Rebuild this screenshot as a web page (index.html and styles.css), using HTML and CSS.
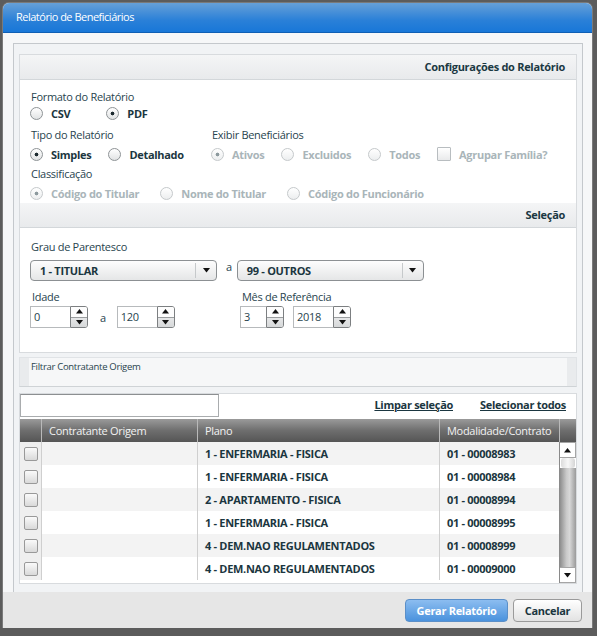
FILE: index.html
```html
<!DOCTYPE html>
<html lang="pt-BR">
<head>
    <meta charset="UTF-8">
    <meta name="viewport" content="width=device-width, initial-scale=1.0">
    <title>Relatório de Beneficiários</title>
    <link rel="stylesheet" href="styles.css">
</head>
<body>
    <div class="dialog">
        <div class="dialog-title">Relatório de Beneficiários</div>

        <div class="dialog-body">
            <div class="panel">

                <div class="section-box">
                    <div class="section-header">Configurações do Relatório</div>
                    <div class="config">
                        <div class="field-label">Formato do Relatório</div>
                        <div class="options">
                            <label class="opt opt-csv"><span class="radio"></span>CSV</label>
                            <label class="opt"><span class="radio checked"></span>PDF</label>
                        </div>

                        <div class="option-groups">
                            <div class="group group-tipo">
                                <div class="field-label">Tipo do Relatório</div>
                                <div class="options spaced">
                                    <label class="opt"><span class="radio checked"></span>Simples</label>
                                    <label class="opt"><span class="radio"></span>Detalhado</label>
                                </div>
                            </div>
                            <div class="group">
                                <div class="field-label">Exibir Beneficiários</div>
                                <div class="options spaced">
                                    <label class="opt disabled"><span class="radio checked"></span>Ativos</label>
                                    <label class="opt disabled"><span class="radio"></span>Excluidos</label>
                                    <label class="opt disabled"><span class="radio"></span>Todos</label>
                                    <label class="opt disabled"><span class="checkbox"></span>Agrupar Família?</label>
                                </div>
                            </div>
                        </div>

                        <div class="field-label gap-top">Classificação</div>
                        <div class="options spaced wide">
                            <label class="opt disabled"><span class="radio checked"></span>Código do Titular</label>
                            <label class="opt disabled"><span class="radio"></span>Nome do Titular</label>
                            <label class="opt disabled"><span class="radio"></span>Código do Funcionário</label>
                        </div>
                    </div>

                    <div class="section-header">Seleção</div>
                    <div class="selection">
                        <div class="field-label">Grau de Parentesco</div>
                        <div class="select-row">
                            <div class="select">
                                <span class="select-value">1 - TITULAR</span>
                                <span class="select-arrow"><svg width="7" height="5" viewBox="0 0 7 5"><path d="M0 0H7L3.5 4.5Z" fill="#111"/></svg></span>
                            </div>
                            <span class="sep">a</span>
                            <div class="select">
                                <span class="select-value">99 - OUTROS</span>
                                <span class="select-arrow"><svg width="7" height="5" viewBox="0 0 7 5"><path d="M0 0H7L3.5 4.5Z" fill="#111"/></svg></span>
                            </div>
                        </div>

                        <div class="range-row">
                            <div class="range range-idade">
                                <div class="field-label">Idade</div>
                                <div class="spin-row">
                                    <div class="spinner">
                                        <span class="spin-value">0</span>
                                        <span class="spin-btns">
                                            <span class="spin-up"><svg width="7" height="5" viewBox="0 0 7 5"><path d="M0 4.5H7L3.5 0Z" fill="#111"/></svg></span>
                                            <span class="spin-down"><svg width="7" height="5" viewBox="0 0 7 5"><path d="M0 0H7L3.5 4.5Z" fill="#111"/></svg></span>
                                        </span>
                                    </div>
                                    <span class="spin-sep">a</span>
                                    <div class="spinner">
                                        <span class="spin-value">120</span>
                                        <span class="spin-btns">
                                            <span class="spin-up"><svg width="7" height="5" viewBox="0 0 7 5"><path d="M0 4.5H7L3.5 0Z" fill="#111"/></svg></span>
                                            <span class="spin-down"><svg width="7" height="5" viewBox="0 0 7 5"><path d="M0 0H7L3.5 4.5Z" fill="#111"/></svg></span>
                                        </span>
                                    </div>
                                </div>
                            </div>
                            <div class="range">
                                <div class="field-label">Mês de Referência</div>
                                <div class="spin-row">
                                    <div class="spinner">
                                        <span class="spin-value short">3</span>
                                        <span class="spin-btns">
                                            <span class="spin-up"><svg width="7" height="5" viewBox="0 0 7 5"><path d="M0 4.5H7L3.5 0Z" fill="#111"/></svg></span>
                                            <span class="spin-down"><svg width="7" height="5" viewBox="0 0 7 5"><path d="M0 0H7L3.5 4.5Z" fill="#111"/></svg></span>
                                        </span>
                                    </div>
                                    <div class="spinner spinner-year">
                                        <span class="spin-value">2018</span>
                                        <span class="spin-btns">
                                            <span class="spin-up"><svg width="7" height="5" viewBox="0 0 7 5"><path d="M0 4.5H7L3.5 0Z" fill="#111"/></svg></span>
                                            <span class="spin-down"><svg width="7" height="5" viewBox="0 0 7 5"><path d="M0 0H7L3.5 4.5Z" fill="#111"/></svg></span>
                                        </span>
                                    </div>
                                </div>
                            </div>
                        </div>
                    </div>
                </div>

                <div class="filter-box">Filtrar Contratante Origem</div>

                <div class="grid-box">
                    <div class="grid-toolbar">
                        <div class="search"></div>
                        <div class="grid-links">
                            <a href="#">Limpar seleção</a>
                            <a href="#">Selecionar todos</a>
                        </div>
                    </div>

                    <div class="grid-head">
                        <div class="th"></div>
                        <div class="th">Contratante Origem</div>
                        <div class="th">Plano</div>
                        <div class="th">Modalidade/Contrato</div>
                        <div class="th"></div>
                    </div>

                    <div class="grid-body">
                        <div class="rows">
                            <div class="row"><div class="cell-check"><span class="box"></span></div><div class="cell"></div><div class="cell">1 - ENFERMARIA - FISICA</div><div class="cell">01 - 00008983</div></div>
                            <div class="row"><div class="cell-check"><span class="box"></span></div><div class="cell"></div><div class="cell">1 - ENFERMARIA - FISICA</div><div class="cell">01 - 00008984</div></div>
                            <div class="row"><div class="cell-check"><span class="box"></span></div><div class="cell"></div><div class="cell">2 - APARTAMENTO - FISICA</div><div class="cell">01 - 00008994</div></div>
                            <div class="row"><div class="cell-check"><span class="box"></span></div><div class="cell"></div><div class="cell">1 - ENFERMARIA - FISICA</div><div class="cell">01 - 00008995</div></div>
                            <div class="row"><div class="cell-check"><span class="box"></span></div><div class="cell"></div><div class="cell">4 - DEM.NAO REGULAMENTADOS</div><div class="cell">01 - 00008999</div></div>
                            <div class="row"><div class="cell-check"><span class="box"></span></div><div class="cell"></div><div class="cell">4 - DEM.NAO REGULAMENTADOS</div><div class="cell">01 - 00009000</div></div>
                        </div>
                        <div class="scrollbar">
                            <div class="scroll-btn"><svg width="7" height="5" viewBox="0 0 7 5"><path d="M0 4.5H7L3.5 0Z" fill="#111"/></svg></div>
                            <div class="scroll-gap"></div>
                            <div class="scroll-thumb"></div>
                            <div class="scroll-btn"><svg width="7" height="5" viewBox="0 0 7 5"><path d="M0 0H7L3.5 4.5Z" fill="#111"/></svg></div>
                        </div>
                    </div>
                </div>

            </div>
        </div>

        <div class="dialog-footer">
            <button class="btn btn-primary">Gerar Relatório</button>
            <button class="btn btn-cancel">Cancelar</button>
        </div>
    </div>
</body>
</html>
```

FILE: styles.css
```css
body {
    margin: 0;
    background-color: #5c5c5c;
    font-family: "Open Sans", "Noto Sans", sans-serif;
    font-size: 11px;
    letter-spacing: -0.3px;
    color: #28444e;
}
.dialog {
    margin: 3px 0 0 3px;
    width: 589px;
    height: 625px;
    background-color: #f6f7f8;
    border-radius: 6px 6px 0 0;
    box-shadow: 0 0 0 1px #7a7a7a;
    display: flex;
    flex-direction: column;
    overflow: hidden;
}
.dialog-title {
    height: 29px;
    line-height: 27px;
    padding-left: 13px;
    color: #fff;
    letter-spacing: -0.5px;
    background: linear-gradient(#66a0d8, #2a80d8 60%, #1877d8);
    border-bottom: 1px solid #0f5fb4;
}
.dialog-body {
    flex: 1;
    display: flex;
    padding: 10px 9px 0 10px;
}
.panel {
    flex: 1;
    border: 1px solid #c4c8cc;
    border-bottom: none;
    background-color: #f1f3f5;
    padding: 10px 5px 0 5px;
}

/* sections */
.section-box {
    border: 1px solid #d8dbde;
    background-color: #fff;
}
.section-header {
    height: 24px;
    line-height: 24px;
    text-align: right;
    padding-right: 11px;
    font-weight: bold;
    color: #1b3842;
    background: linear-gradient(#f4f5f6, #e8eaec);
    border-bottom: 1px solid #d3d7da;
}
.config {
    height: 114px;
    padding: 9px 0 0 10px;
}
.field-label {
    line-height: 15px;
    padding-left: 1px;
}
.gap-top {
    margin-top: 3px;
}
.options {
    display: flex;
    align-items: center;
    height: 18px;
}
.options.spaced {
    margin-top: 3px;
}
.option-groups {
    display: flex;
    margin-top: 5px;
}
.group-tipo {
    width: 181px;
}
.opt {
    display: inline-flex;
    align-items: center;
    gap: 8px;
    margin-right: 17px;
    font-weight: bold;
    color: #1b3640;
}
.options.wide .opt {
    margin-right: 21px;
}
.opt-csv {
    margin-right: 36px;
}
.opt.disabled {
    color: #a9b5b9;
}
.radio {
    flex: none;
    width: 11px;
    height: 11px;
    border: 1px solid #8e9396;
    border-radius: 50%;
    background: linear-gradient(#ffffff, #e1e3e4);
}
.radio.checked {
    background: radial-gradient(circle, #1d2b30 1.6px, transparent 2.2px), linear-gradient(#ffffff, #e1e3e4);
}
.disabled .radio {
    border-color: #c5c9cb;
    background: linear-gradient(#ffffff, #eceeef);
}
.disabled .radio.checked {
    background: radial-gradient(circle, #8d9a9e 1.6px, transparent 2.2px), linear-gradient(#ffffff, #eceeef);
}
.checkbox {
    flex: none;
    width: 12px;
    height: 12px;
    border: 1px solid #b8bdc0;
    border-radius: 1px;
    background: linear-gradient(#ffffff, #e9eaeb);
}

/* selection */
.selection {
    height: 113px;
    padding: 11px 0 0 10px;
}
.select-row {
    display: flex;
    margin-top: 6px;
}
.select {
    width: 185px;
    height: 19px;
    display: flex;
    align-items: center;
    border: 1px solid #8c9093;
    border-radius: 4px;
    background: linear-gradient(#fdfdfd, #e5e6e7);
    font-weight: bold;
    color: #1b3640;
}
.select-value {
    flex: 1;
    padding-left: 9px;
}
.select-arrow {
    width: 20px;
    height: 15px;
    border-left: 1px solid #c6c9cb;
    display: flex;
    align-items: center;
    justify-content: center;
}
.sep {
    line-height: 14px;
    margin: 0 5px 0 9px;
}
.range-row {
    display: flex;
    margin-top: 8px;
}
.range-idade {
    width: 210px;
}
.range-idade .field-label {
    padding-left: 3px;
}
.range .field-label {
    padding-left: 2px;
}
.spin-row {
    display: flex;
    align-items: center;
    margin-top: 2px;
}
.spinner {
    display: flex;
    height: 22px;
}
.spinner-year {
    margin-left: 9px;
}
.spin-value {
    width: 36px;
    border: 1px solid #b7babc;
    border-right: none;
    background-color: #fff;
    padding-left: 3px;
    line-height: 20px;
}
.spin-value.short {
    width: 22px;
}
.spin-btns {
    width: 16px;
    display: flex;
    flex-direction: column;
    border: 1px solid #7c7f81;
    border-radius: 0 3px 3px 0;
    overflow: hidden;
}
.spin-up, .spin-down {
    flex: 1;
    display: flex;
    align-items: center;
    justify-content: center;
}
.spin-up {
    background-color: #fdfdfd;
    border-bottom: 1px solid #9a9d9f;
}
.spin-down {
    background: linear-gradient(#e6e7e8, #d6d8d9);
}
.spin-sep {
    margin: 0 11px 0 12px;
}

/* filter */
.filter-box {
    margin-top: 4px;
    height: 26px;
    padding: 2px 0 0 11px;
    border: 1px solid #e0e3e6;
    border-bottom-color: #cfd3d6;
    font-size: 9.5px;
    line-height: 13px;
    background: linear-gradient(to right, #e9ebed 9px, #f6f7f8 9px, #f6f7f8 calc(100% - 9px), #e9ebed calc(100% - 9px));
}

/* grid */
.grid-box {
    margin-top: 6px;
    border: 1px solid #d8dbde;
    background-color: #fff;
}
.grid-toolbar {
    height: 25px;
    display: flex;
    justify-content: space-between;
    align-items: flex-start;
}
.search {
    width: 197px;
    height: 21px;
    border: 1px solid #a9acae;
    border-top-color: #8c8f91;
    background-color: #fff;
}
.grid-links {
    display: flex;
    gap: 27px;
    padding: 3px 10px 0 0;
    line-height: 15px;
}
.grid-links a {
    font-weight: bold;
    color: #1b3640;
    text-decoration: underline;
}
.grid-head {
    display: grid;
    grid-template-columns: 21px 156px 242px 120px 17px;
    height: 23px;
    background: linear-gradient(#9a9a9a, #6e6e6e 50%, #555);
}
.th {
    line-height: 23px;
    padding-left: 7px;
    color: #f2f2f2;
    border-left: 1px solid #b9b9b9;
}
.th:first-child {
    border-left: none;
}
.grid-body {
    display: flex;
    height: 141px;
}
.rows {
    width: 539px;
}
.row {
    display: grid;
    grid-template-columns: 21px 156px 242px 120px;
    height: 23px;
    background-color: #fff;
}
.row:nth-child(odd) {
    background-color: #f3f3f3;
}
.cell-check {
    display: flex;
    align-items: center;
    padding-left: 4px;
    background-color: #efefef;
}
.box {
    width: 12px;
    height: 12px;
    border: 1px solid #999;
    border-radius: 2px;
    background: linear-gradient(#fafafa, #d9d9d9);
}
.cell {
    line-height: 23px;
    padding-left: 7px;
    font-weight: bold;
    color: #1b3640;
    border-left: 1px solid #cfcfcf;
}
.scrollbar {
    width: 16px;
    border-left: 1px solid #8a8a8a;
    display: flex;
    flex-direction: column;
    background-color: #fff;
}
.scroll-btn {
    height: 14px;
    display: flex;
    align-items: center;
    justify-content: center;
    border: 1px solid #a5a5a5;
    border-left: none;
    background-color: #fff;
}
.scroll-gap {
    height: 10px;
    border-radius: 3px;
    margin: 0 1px;
    background: linear-gradient(to right, #dcdcdc, #f8f8f8, #d5d5d5);
}
.scroll-thumb {
    flex: 1;
    background: linear-gradient(to right, #8e8e8e, #c9c9c9 40%, #d8d8d8 60%, #9a9a9a);
}

/* footer */
.dialog-footer {
    height: 29px;
    padding: 7px 10px 0 0;
    display: flex;
    justify-content: flex-end;
    align-items: flex-start;
    gap: 5px;
    background-color: #e6e6e6;
    border-top: none;
}
.btn {
    height: 23px;
    border-radius: 4px;
    font-family: "Open Sans", "Noto Sans", sans-serif;
    font-size: 11px;
    letter-spacing: -0.3px;
    font-weight: bold;
    padding: 0;
    cursor: pointer;
}
.btn-primary {
    width: 103px;
    color: #fff;
    border: 1px solid #5b8fc8;
    background: linear-gradient(#8cbdf0, #4a92dd);
}
.btn-cancel {
    width: 69px;
    color: #1b3640;
    border: 1px solid #9a9a9a;
    background: linear-gradient(#ffffff, #e2e2e2);
}
```
